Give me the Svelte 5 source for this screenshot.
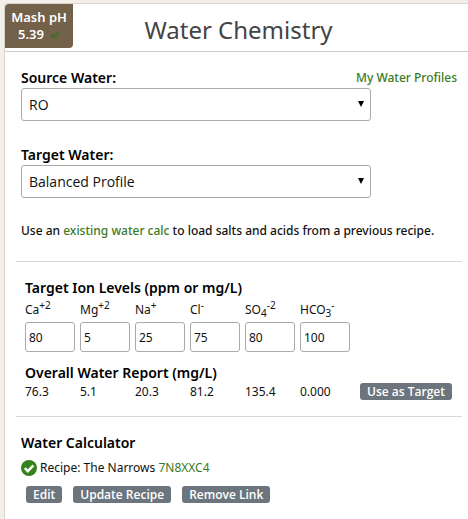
<script>
  let source = $state('RO');
  let target = $state('Balanced Profile');

  // charge and count are drawn as superscript / subscript next to the symbol
  let ions = $state([
    { id: 'ca', symbol: 'Ca', count: '', charge: '+2', level: 80, overall: '76.3' },
    { id: 'mg', symbol: 'Mg', count: '', charge: '+2', level: 5, overall: '5.1' },
    { id: 'na', symbol: 'Na', count: '', charge: '+', level: 25, overall: '20.3' },
    { id: 'cl', symbol: 'Cl', count: '', charge: '-', level: 75, overall: '81.2' },
    { id: 'so4', symbol: 'SO', count: '4', charge: '-2', level: 80, overall: '135.4' },
    { id: 'hco3', symbol: 'HCO', count: '3', charge: '-', level: 100, overall: '0.000' }
  ]);

  function useAsTarget() {
    for (const ion of ions) {
      ion.level = Math.round(parseFloat(ion.overall));
    }
  }
</script>

<main class="card">
  <header class="card-header">
    <div class="mash-ph">
      <span>Mash pH</span>
      <span class="ph-value">
        5.39
        <svg width="10" height="10" viewBox="0 0 10 10" aria-hidden="true">
          <path d="M0 6L2 4L4 6L8 1L10 3L4 9Z" fill="#486a2a" />
        </svg>
      </span>
    </div>
    <h1>Water Chemistry</h1>
  </header>

  <section class="profiles">
    <div class="field">
      <div class="field-head">
        <label for="source">Source Water:</label>
        <a href="#profiles">My Water Profiles</a>
      </div>
      <div class="select-box">
        <select id="source" bind:value={source}>
          <option>RO</option>
        </select>
        <svg class="arrow" width="6" height="6" viewBox="0 0 6 6" aria-hidden="true">
          <path d="M0 0H6L3 6Z" fill="#000" />
        </svg>
      </div>
    </div>

    <div class="field">
      <div class="field-head">
        <label for="target">Target Water:</label>
      </div>
      <div class="select-box">
        <select id="target" bind:value={target}>
          <option>Balanced Profile</option>
        </select>
        <svg class="arrow" width="6" height="6" viewBox="0 0 6 6" aria-hidden="true">
          <path d="M0 0H6L3 6Z" fill="#000" />
        </svg>
      </div>
    </div>

    <p class="hint">
      Use an <a href="#calc">existing water calc</a> to load salts and acids from a previous recipe.
    </p>
  </section>

  <section class="levels">
    <h2>Target Ion Levels (ppm or mg/L)</h2>
    <div class="ions">
      {#each ions as ion (ion.id)}
        <div class="ion">
          <label for={ion.id}>{ion.symbol}{#if ion.count}<sub>{ion.count}</sub>{/if}<sup>{ion.charge}</sup></label>
          <input id={ion.id} type="text" bind:value={ion.level} />
        </div>
      {/each}
    </div>

    <h2>Overall Water Report (mg/L)</h2>
    <div class="report">
      <table>
        <tbody>
          <tr>
            {#each ions as ion (ion.id)}
              <td>{ion.overall}</td>
            {/each}
          </tr>
        </tbody>
      </table>
      <button type="button" onclick={useAsTarget}>Use as Target</button>
    </div>
  </section>

  <section class="calculator">
    <h2>Water Calculator</h2>
    <p class="recipe">
      <svg width="16" height="16" viewBox="0 0 16 16" aria-hidden="true">
        <circle cx="8" cy="8" r="8" fill="#35811b" />
        <path d="M3.8 8.2L6.8 11.2L12.4 5.4" fill="none" stroke="#fff" stroke-width="2.4" />
      </svg>
      <span>Recipe: The Narrows <a href="#recipe">7N8XXC4</a></span>
    </p>
    <div class="actions">
      <button type="button">Edit</button>
      <button type="button">Update Recipe</button>
      <button type="button">Remove Link</button>
    </div>
  </section>
</main>

<style>
  :global(body) {
    background: #f2efe9;
    font-family: 'Noto Sans', 'Open Sans', sans-serif;
    font-size: 12px;
    color: #111;
  }

  .card {
    box-sizing: border-box;
    min-height: calc(100vh - 3px);
    margin: 3px 0 0 4px;
    border: 1px solid #d9d4cd;
    border-width: 1px 0 0 1px;
    border-radius: 4px 0 0 0;
    background: #fff;
  }

  .card-header {
    display: flex;
    align-items: flex-start;
    border-bottom: 1px solid #ccc;
    padding-bottom: 3px;
  }

  .mash-ph {
    display: flex;
    flex-direction: column;
    align-items: center;
    box-sizing: border-box;
    width: 68px;
    height: 44px;
    padding-top: 5px;
    border-radius: 4px 0 4px 0;
    background: #73614a;
    color: #fff;
    font-size: 13px;
    font-weight: 600;
    line-height: 17px;
  }

  .ph-value {
    display: flex;
    align-items: center;
    gap: 6px;
  }

  h1 {
    flex: 1;
    height: 44px;
    margin: 0 64px 0 0;
    color: #444;
    font-size: 24px;
    font-weight: 400;
    line-height: 52px;
    text-align: center;
  }

  h2 {
    margin: 0;
    color: #000;
    font-size: 14px;
    font-weight: 600;
    line-height: 20px;
  }

  a {
    color: #3c7a1f;
    text-decoration: none;
  }

  .profiles {
    padding: 16px 11px 21px 16px;
  }

  .field {
    margin-bottom: 24px;
  }

  .field-head {
    display: flex;
    justify-content: space-between;
    line-height: 20px;
  }

  .field-head label {
    color: #000;
    font-size: 14px;
    font-weight: 600;
  }

  .field-head a,
  .hint {
    font-weight: 500;
  }

  .select-box {
    position: relative;
    max-width: 350px;
  }

  select {
    display: block;
    box-sizing: border-box;
    width: 100%;
    height: 33px;
    padding: 0 24px 0 7px;
    border: 1px solid #aaa;
    border-radius: 3px;
    background: #fff;
    color: #111;
    font-family: 'Open Sans', 'Noto Sans', sans-serif;
    font-size: 14px;
    appearance: none;
  }

  .arrow {
    position: absolute;
    top: 13px;
    right: 7px;
    pointer-events: none;
  }

  .hint {
    margin: 0;
    line-height: 18px;
  }

  .levels,
  .calculator {
    margin: 0 6px 0 11px;
    border-top: 1px solid #d8d8d8;
  }

  .levels {
    padding: 16px 10px 16px 9px;
  }

  .ions {
    display: flex;
    gap: 5px;
    margin-bottom: 11px;
  }

  .ion {
    width: 50px;
  }

  .ion label {
    display: block;
    height: 24px;
    line-height: 24px;
    white-space: nowrap;
  }

  sub,
  sup {
    font-size: 10px;
    line-height: 0;
  }

  .ion input {
    display: block;
    box-sizing: border-box;
    width: 100%;
    height: 30px;
    padding: 0 3px;
    border: 1px solid #aaa;
    border-radius: 3px;
    color: #111;
    font: inherit;
  }

  .report {
    display: flex;
    align-items: center;
    gap: 5px;
  }

  table {
    width: 330px;
    table-layout: fixed;
    border-collapse: collapse;
  }

  td {
    padding: 0;
    line-height: 15px;
  }

  button {
    height: 17px;
    padding: 0 7px;
    border: 0;
    border-radius: 3px;
    background: #6c757d;
    color: #fff;
    font-family: 'Open Sans', 'Noto Sans', sans-serif;
    font-size: 12px;
    font-weight: 600;
    line-height: 17px;
    white-space: nowrap;
    cursor: pointer;
  }

  .calculator {
    padding: 16px 5px;
  }

  .recipe {
    display: flex;
    align-items: center;
    gap: 3px;
    margin: 7px 0 10px;
    line-height: 16px;
  }

  .actions {
    display: flex;
    gap: 11px;
    padding-left: 5px;
  }
</style>
